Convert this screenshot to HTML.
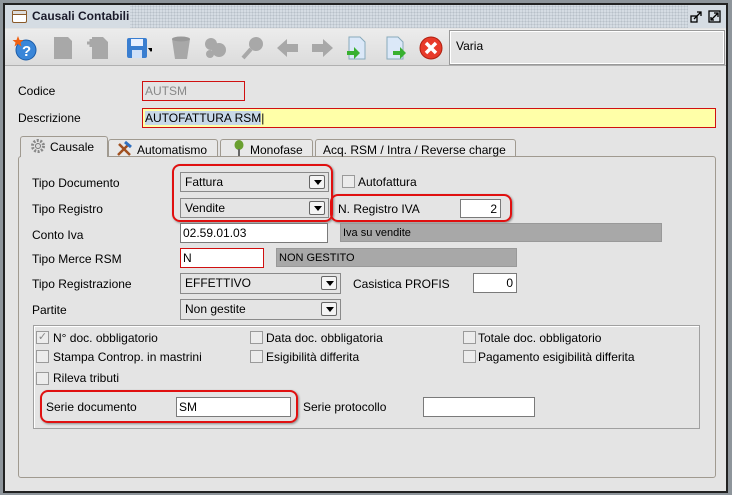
<!DOCTYPE html>
<html><head><meta charset="utf-8"><style>
*{margin:0;padding:0;box-sizing:border-box}
body{width:732px;height:495px;overflow:hidden;background:#8e959b;font-family:"Liberation Sans",sans-serif;font-size:12px;color:#000;position:relative}
.a{position:absolute}
.t{position:absolute;white-space:nowrap;line-height:14px}
.fld{position:absolute;background:#fff;border:1px solid #7a7a7a;padding-left:2px;line-height:18px;white-space:nowrap}
.cmb{position:absolute;background:#e4e4e4;border:1px solid #8a8a8a;padding-left:4px;line-height:18px}
.cmb i{position:absolute;right:3px;top:2px;width:16px;height:14px;border:1px solid #666;background:#f4f4f4;border-radius:2px}
.cmb i:after{content:"";position:absolute;left:4px;top:4px;border-left:4px solid transparent;border-right:4px solid transparent;border-top:5px solid #000}
.cb{position:absolute;width:13px;height:13px;border:1px solid #9a9a9a;background:#ececec}
.red{position:absolute;border:2px solid #e01010;border-radius:8px;box-shadow:1px 1px 2px #888}
.tb{position:absolute;top:35px;width:26px;height:26px}
</style></head><body>
<div class="a" style="left:3px;top:3px;width:725px;height:490px;background:#222"></div>
<div class="a" style="left:5px;top:5px;width:721px;height:486px;background:#e4e4e4"></div>
<div class="a" style="left:5px;top:5px;width:721px;height:23px;background:#d5dce3;background-image:radial-gradient(#b8c0c8 0.8px,transparent 0.9px);background-size:3px 3px"></div>
<div class="a" style="left:5px;top:5px;width:125px;height:23px;background:#d5dce3"></div>
<div class="a" style="left:688px;top:5px;width:38px;height:23px;background:#d5dce3"></div>
<div class="a" style="left:12px;top:10px;width:15px;height:13px;border:1.5px solid #8a5a2a;border-radius:2px;background:#fff"><div style="border-bottom:1.5px solid #8a5a2a;height:4px;background:#ddd"></div></div>
<div class="t" style="left:32px;top:9px;font-weight:bold;font-size:12px;color:#1a1a2a">Causali Contabili</div>
<svg class="a" style="left:690px;top:8px" width="34" height="16"><g fill="none" stroke="#000" stroke-width="1.3"><rect x="1" y="8" width="6" height="6"/><path d="M4 11 L11 4 M7 4 H11 V8"/><rect x="19" y="3" width="11" height="11"/><path d="M21 12 L28 5 M24 5 H28 V9 M21 9 V12 H24"/></g></svg>
<div class="a" style="left:5px;top:29px;width:721px;height:37px;background:linear-gradient(#ececec,#dcdcdc);border-bottom:1px solid #b0b0b0"></div>
<svg class="tb" style="left:12px" viewBox="0 0 26 26"><circle cx="14" cy="15" r="10" fill="#3a86d8" stroke="#1b5ca8"/><text x="10" y="21" fill="#fff" font-weight="bold" font-size="15" font-family="Liberation Sans">?</text><path d="M6 1 L7.5 5 L11.5 5 L8.5 7.5 L9.5 11.5 L6 9 L2.5 11.5 L3.5 7.5 L0.5 5 L4.5 5Z" fill="#f06010"/></svg>
<svg class="tb" style="left:50px" viewBox="0 0 26 26"><path d="M4 2 H18 L22 6 V24 H4Z" fill="#a8a8a8"/></svg>
<svg class="tb" style="left:86px" viewBox="0 0 26 26"><path d="M6 2 H17 L22 7 V24 H6Z" fill="#a8a8a8"/><path d="M1 8 H9 M5 4 V12" stroke="#a8a8a8" stroke-width="3"/></svg>
<svg class="tb" style="left:126px" viewBox="0 0 26 26"><rect x="1" y="3" width="20" height="20" rx="2" fill="#3a7ed0"/><rect x="5" y="4" width="12" height="7" fill="#e8f0ff"/><rect x="6" y="15" width="10" height="8" fill="#cfe0f8"/><path d="M22 13 L28 13 L25 17Z" fill="#000"/></svg>
<svg class="tb" style="left:168px" viewBox="0 0 26 26"><path d="M4 4 H22 L19 24 H7Z" fill="#a8a8a8"/><ellipse cx="13" cy="4" rx="9" ry="2.5" fill="#999"/></svg>
<svg class="tb" style="left:202px" viewBox="0 0 26 26"><circle cx="9" cy="9" r="6" fill="#a8a8a8"/><circle cx="17" cy="15" r="7" fill="#a8a8a8"/><circle cx="8" cy="19" r="4" fill="#a8a8a8"/></svg>
<svg class="tb" style="left:240px" viewBox="0 0 26 26"><circle cx="16" cy="9" r="7" fill="#a8a8a8"/><path d="M11 14 L3 23" stroke="#a8a8a8" stroke-width="4"/></svg>
<svg class="tb" style="left:275px" viewBox="0 0 26 26"><path d="M2 13 L12 4 V9 H23 V17 H12 V22Z" fill="#a8a8a8"/></svg>
<svg class="tb" style="left:309px" viewBox="0 0 26 26"><path d="M24 13 L14 4 V9 H3 V17 H14 V22Z" fill="#a8a8a8"/></svg>
<svg class="tb" style="left:345px" viewBox="0 0 26 26"><path d="M4 2 H15 L20 7 V24 H4Z" fill="#dbe8f8" stroke="#8ab"/><path d="M2 16 L9 16 V12 L15 18 L9 24 V20 H2Z" fill="#38b030"/></svg>
<svg class="tb" style="left:383px" viewBox="0 0 26 26"><path d="M4 2 H15 L20 7 V24 H4Z" fill="#dbe8f8" stroke="#8ab"/><path d="M10 16 L17 16 V12 L23 18 L17 24 V20 H10Z" fill="#38b030"/></svg>
<svg class="tb" style="left:418px" viewBox="0 0 26 26"><circle cx="13" cy="13" r="11" fill="#e83a2a" stroke="#b02010"/><path d="M8 8 L18 18 M18 8 L8 18" stroke="#fff" stroke-width="3.5"/></svg>
<div class="a" style="left:449px;top:30px;width:276px;height:35px;border:1px solid #999;outline:1px solid #fff;outline-offset:-2px;background:#e4e4e4"></div>
<div class="t" style="left:456px;top:39px">Varia</div>
<div class="t" style="left:18px;top:84px">Codice</div>
<div class="fld" style="left:142px;top:81px;width:103px;height:20px;background:#e4e4e4;border-color:#d01010;color:#888">AUTSM</div>
<div class="t" style="left:18px;top:111px">Descrizione</div>
<div class="fld" style="left:142px;top:108px;width:574px;height:20px;background:#ffffa8;border-color:#d01010"><span style="background:#c8d8e8">AUTOFATTURA RSM</span>|</div>
<div class="a" style="left:18px;top:156px;width:698px;height:322px;border:1px solid #a09a90;border-radius:3px;background:#e4e4e4"></div>
<div class="a" style="left:20px;top:136px;width:88px;height:21px;border:1px solid #a09a90;border-bottom:none;border-radius:3px 3px 0 0;background:#e4e4e4"></div>
<div class="a" style="left:108px;top:139px;width:110px;height:18px;border:1px solid #a09a90;border-radius:3px 3px 0 0;background:#e8e8e8"></div>
<div class="a" style="left:220px;top:139px;width:93px;height:18px;border:1px solid #a09a90;border-radius:3px 3px 0 0;background:#e8e8e8"></div>
<div class="a" style="left:315px;top:139px;width:201px;height:18px;border:1px solid #a09a90;border-radius:3px 3px 0 0;background:#e8e8e8"></div>
<svg class="a" style="left:30px;top:138px" width="16" height="16"><circle cx="8" cy="8" r="5.5" fill="none" stroke="#888" stroke-width="3" stroke-dasharray="2 1.5"/><circle cx="8" cy="8" r="2.5" fill="#ddd" stroke="#777"/></svg>
<div class="t" style="left:50px;top:140px">Causale</div>
<svg class="a" style="left:116px;top:141px" width="16" height="16"><path d="M2 14 L13 3 M3 3 L14 14" stroke="#a05020" stroke-width="2.5"/><path d="M9 1 L15 6" stroke="#3070c0" stroke-width="3"/></svg>
<div class="t" style="left:137px;top:143px">Automatismo</div>
<svg class="a" style="left:233px;top:140px" width="12" height="17"><ellipse cx="6" cy="5" rx="4.5" ry="5" fill="#6aa030"/><path d="M6 9 V16" stroke="#666" stroke-width="2"/></svg>
<div class="t" style="left:250px;top:143px">Monofase</div>
<div class="t" style="left:323px;top:143px">Acq. RSM / Intra / Reverse charge</div>
<div class="t" style="left:32px;top:176px">Tipo Documento</div>
<div class="cmb" style="left:180px;top:172px;width:149px;height:20px">Fattura<i></i></div>
<div class="cb" style="left:342px;top:175px"></div>
<div class="t" style="left:358px;top:175px">Autofattura</div>
<div class="t" style="left:32px;top:202px">Tipo Registro</div>
<div class="cmb" style="left:180px;top:198px;width:149px;height:20px">Vendite<i></i></div>
<div class="t" style="left:338px;top:202px">N. Registro IVA</div>
<div class="fld" style="left:460px;top:199px;width:41px;height:19px;text-align:right;padding-right:3px">2</div>
<div class="red" style="left:172px;top:164px;width:161px;height:58px"></div>
<div class="red" style="left:330px;top:194px;width:182px;height:28px"></div>
<div class="t" style="left:32px;top:228px">Conto Iva</div>
<div class="fld" style="left:180px;top:223px;width:148px;height:20px">02.59.01.03</div>
<div class="fld" style="left:340px;top:223px;width:322px;height:19px;background:#a8a8a8;border-color:#999;font-size:11px">Iva su vendite</div>
<div class="t" style="left:32px;top:252px">Tipo Merce RSM</div>
<div class="fld" style="left:180px;top:248px;width:84px;height:20px;border-color:#d01010">N</div>
<div class="fld" style="left:276px;top:248px;width:241px;height:19px;background:#a8a8a8;border-color:#999;font-size:11px">NON GESTITO</div>
<div class="t" style="left:32px;top:277px">Tipo Registrazione</div>
<div class="cmb" style="left:180px;top:273px;width:161px;height:21px">EFFETTIVO<i></i></div>
<div class="t" style="left:353px;top:277px">Casistica PROFIS</div>
<div class="fld" style="left:473px;top:273px;width:44px;height:20px;text-align:right;padding-right:3px">0</div>
<div class="t" style="left:32px;top:303px">Partite</div>
<div class="cmb" style="left:180px;top:299px;width:161px;height:21px">Non gestite<i></i></div>
<div class="a" style="left:33px;top:325px;width:667px;height:104px;border:1px solid #a0a0a0;box-shadow:inset 1px 1px 0 #fff"></div>
<div class="cb" style="left:36px;top:331px;color:#888;font-size:11px;line-height:11px;text-align:center">✓</div>
<div class="t" style="left:53px;top:331px">N° doc. obbligatorio</div>
<div class="cb" style="left:250px;top:331px"></div>
<div class="t" style="left:266px;top:331px">Data doc. obbligatoria</div>
<div class="cb" style="left:463px;top:331px"></div>
<div class="t" style="left:478px;top:331px">Totale doc. obbligatorio</div>
<div class="cb" style="left:36px;top:350px"></div>
<div class="t" style="left:53px;top:350px">Stampa Controp. in mastrini</div>
<div class="cb" style="left:250px;top:350px"></div>
<div class="t" style="left:266px;top:350px">Esigibilità differita</div>
<div class="cb" style="left:463px;top:350px"></div>
<div class="t" style="left:478px;top:350px">Pagamento esigibilità differita</div>
<div class="cb" style="left:36px;top:372px"></div>
<div class="t" style="left:53px;top:371px">Rileva tributi</div>
<div class="t" style="left:46px;top:400px">Serie documento</div>
<div class="fld" style="left:176px;top:397px;width:115px;height:20px">SM</div>
<div class="red" style="left:40px;top:390px;width:258px;height:33px"></div>
<div class="t" style="left:303px;top:400px">Serie protocollo</div>
<div class="fld" style="left:423px;top:397px;width:112px;height:20px"></div>
</body></html>
